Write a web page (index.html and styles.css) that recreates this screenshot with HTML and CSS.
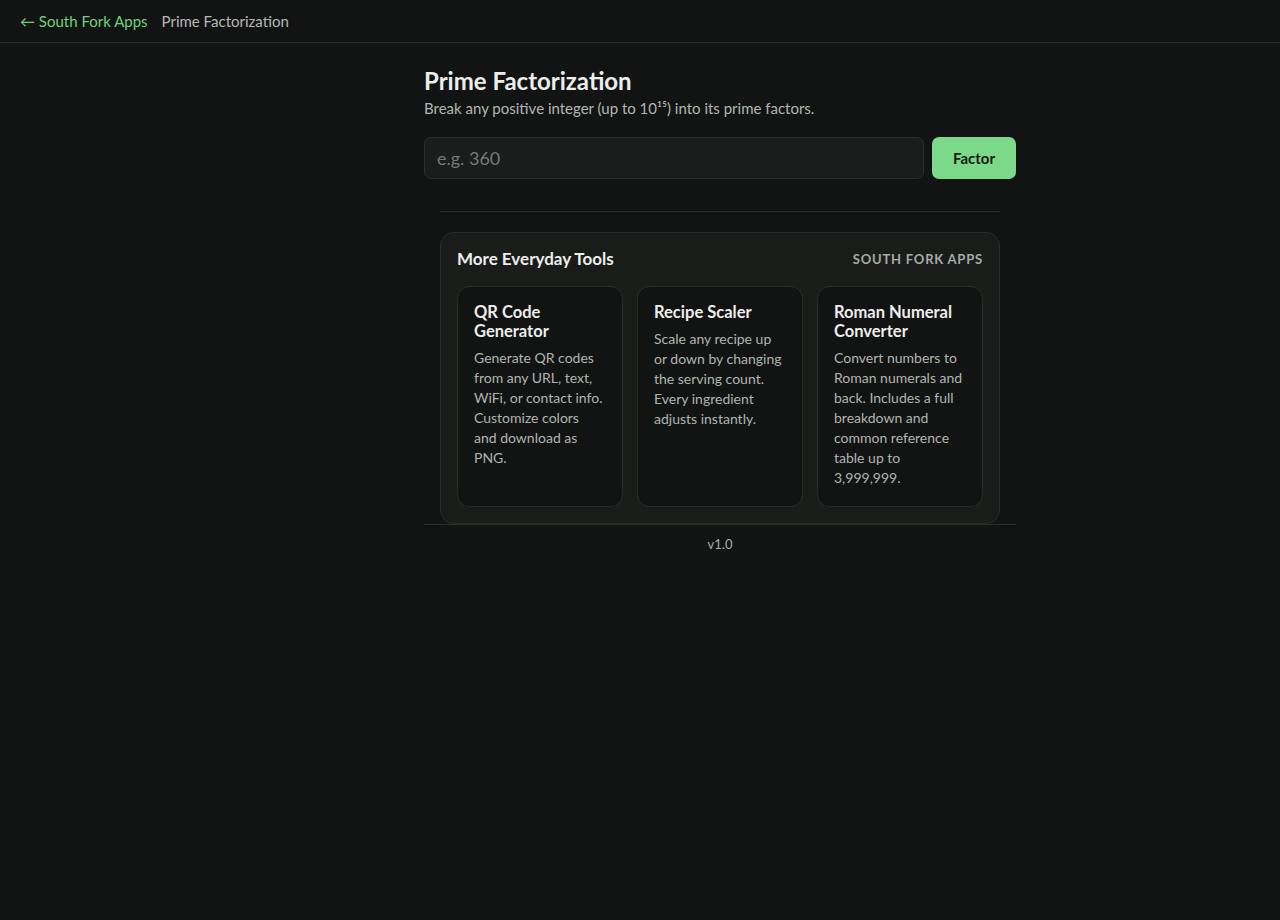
FILE: index.html
```html
<!DOCTYPE html>
<html lang="en">
<head>
<meta charset="utf-8">
<title>Prime Factorization</title>
<link rel="stylesheet" href="styles.css">
</head>
<body>
<header class="topbar">
  <a class="back" href="#">← South Fork Apps</a>
  <span class="crumb">Prime Factorization</span>
</header>
<main class="page">
  <h1 class="title">Prime Factorization</h1>
  <p class="subtitle">Break any positive integer (up to 10¹⁵) into its prime factors.</p>
  <form class="factor-form">
    <input class="num-input" type="text" placeholder="e.g. 360">
    <button class="factor-btn" type="button">Factor</button>
  </form>
  <section class="more">
    <hr class="sep">
    <div class="more-card">
      <div class="more-head">
        <h2 class="more-title">More Everyday Tools</h2>
        <span class="more-brand">SOUTH FORK APPS</span>
      </div>
      <div class="tools">
        <a class="tool" href="#">
          <h3 class="tool-name">QR Code Generator</h3>
          <p class="tool-desc">Generate QR codes from any URL, text, WiFi, or contact info. Customize colors and&nbsp;download as PNG.</p>
        </a>
        <a class="tool" href="#">
          <h3 class="tool-name">Recipe Scaler</h3>
          <p class="tool-desc">Scale any recipe up or down by changing the serving count. Every ingredient adjusts instantly.</p>
        </a>
        <a class="tool" href="#">
          <h3 class="tool-name">Roman Numeral Converter</h3>
          <p class="tool-desc">Convert numbers to Roman numerals and back. Includes a full breakdown and common reference table up to 3,999,999.</p>
        </a>
      </div>
    </div>
  </section>
  <footer class="foot">v1.0</footer>
</main>
</body>
</html>
```

FILE: styles.css
```css
* { box-sizing: border-box; }
html, body { margin: 0; padding: 0; }
body {
  background: #121413;
  color: #e8eae8;
  font-family: Lato, "Noto Sans", sans-serif;
  min-height: 920px;
}
.topbar {
  height: 43px;
  border-bottom: 1px solid #2a2d2b;
  display: flex;
  align-items: center;
  gap: 14px;
  padding: 0 20px;
  font-size: 15px;
}
.back { color: #72d07f; text-decoration: none; }
.crumb { color: #b4b8b4; }
.page {
  width: 592px;
  margin-left: 424px;
  padding-top: 23px;
}
.title {
  margin: 0;
  font-size: 24px;
  line-height: 30px;
  font-weight: 700;
  color: #eceeec;
}
.subtitle {
  margin: 2px 0 0;
  font-size: 15px;
  line-height: 20px;
  color: #b2b6b2;
}
.factor-form {
  display: flex;
  gap: 8px;
  margin-top: 19px;
}
.num-input {
  flex: 1;
  height: 42px;
  background: #1a1d1b;
  border: 1px solid #2b2e2c;
  border-radius: 7px;
  padding: 0 12px;
  font-family: inherit;
  font-size: 18px;
  color: #e8eae8;
  outline: none;
}
.num-input::placeholder { color: #767a77; }
.factor-btn {
  width: 84px;
  height: 42px;
  border: none;
  border-radius: 7px;
  background: #7dd98a;
  color: #142016;
  font-family: inherit;
  font-weight: 700;
  font-size: 15px;
}
.more { margin: 32px 16px 0; }
.sep {
  margin: 0;
  border: none;
  border-top: 1px solid #2c2f2d;
}
.more-card {
  margin-top: 20px;
  background: #1a1c1a;
  border: 1px solid #2a2d2b;
  border-radius: 14px;
  padding: 16px;
}
.more-head {
  display: flex;
  justify-content: space-between;
  align-items: flex-start;
  height: 22px;
}
.more-title {
  margin: 0;
  font-size: 17px;
  line-height: 20px;
  font-weight: 700;
  color: #eceeec;
}
.more-brand {
  font-size: 13px;
  line-height: 20px;
  font-weight: 700;
  letter-spacing: 0.8px;
  color: #a6aaa6;
}
.tools {
  margin-top: 15px;
  display: grid;
  grid-template-columns: repeat(3, 1fr);
  gap: 14px;
}
.tool {
  display: block;
  text-decoration: none;
  background: #121413;
  border: 1px solid #2a2d2b;
  border-radius: 12px;
  padding: 16px;
  min-height: 221px;
}
.tool-name {
  margin: 0;
  font-size: 16.5px;
  line-height: 19px;
  font-weight: 700;
  color: #eceeec;
}
.tool-desc {
  margin: 7px 0 0;
  font-size: 14px;
  line-height: 20px;
  color: #b0b4b0;
}
.foot {
  border-top: 1px solid #2a2d2b;
  padding-top: 10px;
  text-align: center;
  font-size: 13px;
  line-height: 18px;
  color: #a8aca8;
}
```
